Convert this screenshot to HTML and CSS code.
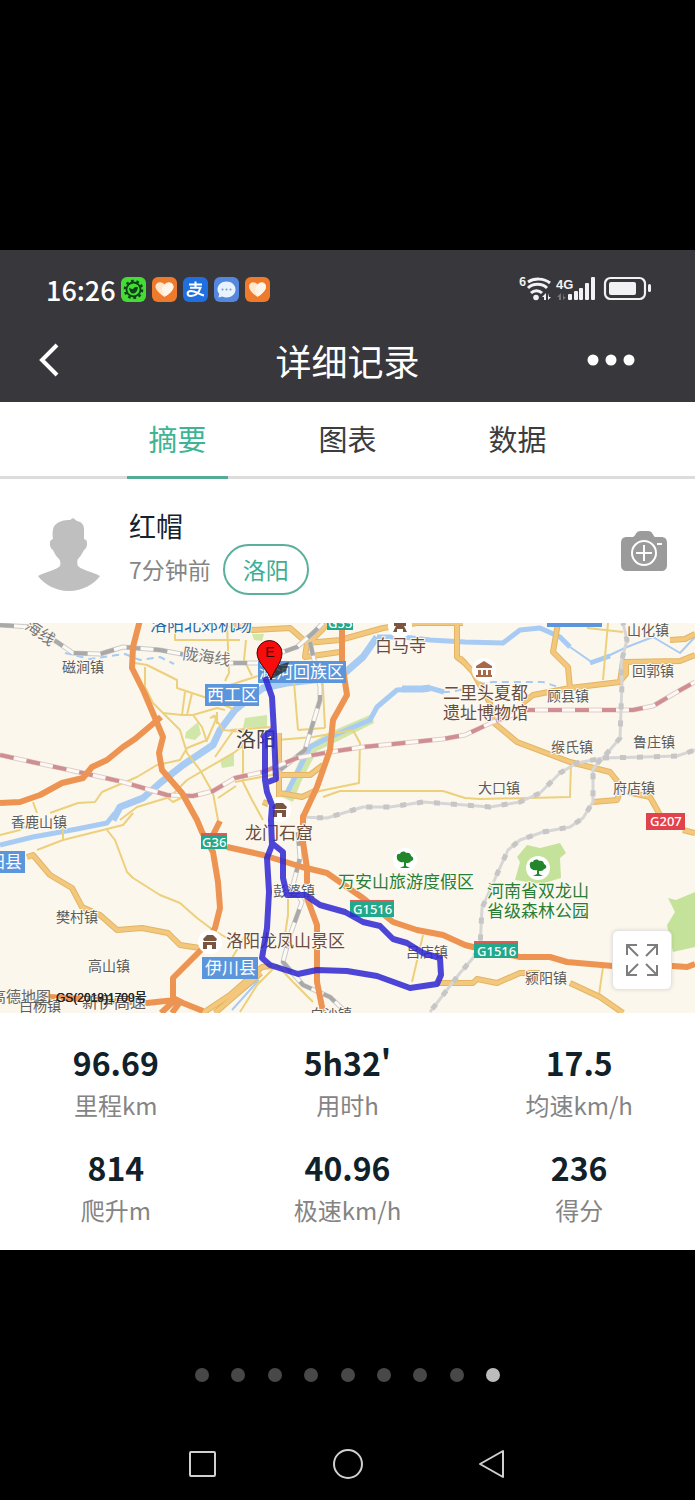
FILE: index.html
```
<!DOCTYPE html>
<html lang="zh-CN">
<head>
  <meta charset="utf-8">
  <meta name="viewport" content="width=device-width, initial-scale=1">
  <title>详细记录</title>
  <link rel="stylesheet" href="styles.css">
</head>
<body>
  <main class="screen">
    <header class="header">
      <div class="status-bar">
        <span class="time">16:26</span>
        <div class="app-icons">
          <svg class="app-icon" viewBox="0 0 25 25">
            <rect width="25" height="25" rx="6" fill="#45dc35"/>
            <circle cx="12.5" cy="12.5" r="8.7" fill="none" stroke="#10401a" stroke-width="2.2" stroke-dasharray="2.7 2.766"/>
            <circle cx="12.5" cy="12.5" r="7" fill="none" stroke="#10401a" stroke-width="1.8"/>
            <path d="M8 10.500c1.500 1 3 1.500 4.200 1.500 1-2 3-2.500 4.800-1.500-.8 4-2.500 6-5 6-2 0-3.500-2-4-6z" fill="#10401a"/>
          </svg>
          <svg class="app-icon" viewBox="0 0 25 25">
            <rect width="25" height="25" rx="6" fill="#f07a2c"/>
            <path d="M12.500 20C7 16 3.500 13 3.500 9.500c0-4.500 6-6 9-2 3-4 9-2.500 9 2 0 3.500-3.500 6.500-9 10.500z" fill="#ffe6cd"/>
            <path d="M10 12c1-4 5-7 8.500-6 3 1 3.500 4 2.500 6-1 2.500-4 5-7 7-3-1.500-4.500-4-4-7z" fill="#fff4e8"/>
          </svg>
          <svg class="app-icon" viewBox="0 0 25 25">
            <rect width="25" height="25" rx="6" fill="#1f6fe0"/>
            <path d="M6 7.500h13M12.500 4.500v6M7 10.800h10.500c-1.500 4.500-5 8.200-9.500 8.200-4.500 0-4.500-5 0-5 4 0 8 3 13 4.500" fill="none" stroke="#fff" stroke-width="2"/>
          </svg>
          <svg class="app-icon" viewBox="0 0 25 25">
            <rect width="25" height="25" rx="6" fill="#5487de"/>
            <path d="M12.500 4.500c5 0 9 3.400 9 8s-4 8-9 8c-1.600 0-3-.3-4.200-.9L4.500 20.500l.7-3.800c-1-1.200-1.700-2.600-1.700-4.200 0-4.600 4-8 9-8z" fill="#e8f3ff"/>
            <circle cx="8.500" cy="12.500" r="1" fill="#7799bb"/><circle cx="12.500" cy="12.500" r="1" fill="#7799bb"/><circle cx="16.500" cy="12.500" r="1" fill="#7799bb"/>
          </svg>
          <svg class="app-icon" viewBox="0 0 25 25">
            <rect width="25" height="25" rx="6" fill="#f07a2c"/>
            <path d="M12.500 20C7 16 4 13 4 9.500c0-4.500 5.500-6 8.500-2 3-4 8.500-2.500 8.500 2 0 3.500-3 6.500-8.500 10.500z" fill="#ffe6cd"/>
            <path d="M10 12c1-4 5-7 8-6 3 1 3.500 4 2.500 6-1 2.500-4 5-6.500 7-3-1.500-4.500-4-4-7z" fill="#fff4e8"/>
          </svg>
        </div>
        <svg class="signals" viewBox="0 0 132 26">
          <g fill="none" stroke="#f2f2f4">
            <path d="M9 6c6-4 16-4 22 1" stroke-width="3"/>
            <path d="M9 12c5-5 14-5 19 0" stroke-width="3"/>
            <path d="M12 17c3-3 8-3 11 0" stroke-width="3"/>
            <rect x="86" y="2" width="40" height="21" rx="5.500" stroke-width="2.2"/>
          </g>
          <g fill="#f2f2f4">
            <text class="signal-text" x="0" y="10">6</text>
            <text class="signal-text net" x="37" y="13">4G</text>
            <circle cx="17" cy="21.500" r="2.800"/>
            <path d="M27 17v7h-2v-3h-2zM29 17v7l3-3h-2z"/>
            <rect x="49" y="18" width="4" height="6" rx="1"/>
            <rect x="55" y="15" width="4" height="9" rx="1"/>
            <rect x="60" y="12" width="4" height="12" rx="1"/>
            <rect x="66" y="7" width="4" height="17" rx="1"/>
            <rect x="72" y="1" width="4" height="23" rx="1"/>
            <rect x="90" y="6" width="27" height="13" rx="2"/>
            <rect x="129" y="8" width="3" height="8" rx="1.500"/>
          </g>
          <path d="M42 17v7h-2v-3h-2zM44 17v7l3-3h-2z" fill="#77777b"/>
        </svg>
      </div>
      <div class="title-bar">
        <button class="icon-btn back" aria-label="返回">
          <svg width="20" height="34" viewBox="0 0 20 34"><path d="M18 2L3 17l15 15" fill="none" stroke="#fff" stroke-width="4"/></svg>
        </button>
        <h1>详细记录</h1>
        <button class="icon-btn more" aria-label="更多">
          <svg width="48" height="12" viewBox="0 0 48 12" fill="#fff"><circle cx="6" cy="6" r="5.500"/><circle cx="24" cy="6" r="5.500"/><circle cx="42" cy="6" r="5.500"/></svg>
        </button>
      </div>
    </header>

    <nav class="tabs">
      <a class="tab active" href="#summary">摘要</a>
      <a class="tab" href="#chart">图表</a>
      <a class="tab" href="#data">数据</a>
    </nav>

    <section class="profile" id="summary">
      <svg class="avatar" viewBox="0 0 62 73">
        <path d="M31 73C17 73 6 66 0 58c9-5 19-6 22-10 1-3 0-6-1-7-3-3-4-5-6-9-3-1-4-8-2-10l2-1c-1-7 0-12 2-14 4-4 9-5 15-5l3-2 4 3c5 1 7 4 7 8v10l2 1c2 2 1 9-2 10-2 4-4 7-6 9-1 1-1 5 0 7 3 4 13 5 22 10-6 8-17 15-31 15z" fill="#bfbfbf"/>
      </svg>
      <div class="profile-text">
        <h2>红帽</h2>
        <div class="meta">
          <span>7分钟前</span>
          <a class="city" href="#city">洛阳</a>
        </div>
      </div>
      <button class="icon-btn camera" aria-label="添加照片">
        <svg width="46" height="40" viewBox="0 0 46 40">
          <path d="M6 6h6c3-1 2-6 8-6h7c5 0 5 5 7 6h6c4 0 6 2 6 6v22c0 4-2 6-6 6H6c-4 0-6-2-6-6V12c0-4 2-6 6-6z" fill="#9b9b9b"/>
          <g fill="none" stroke="#fff" stroke-width="2"><circle cx="23" cy="22" r="12"/><path d="M23 14v16M15 22h16M36 13h5"/></g>
        </svg>
      </button>
    </section>

    <section class="map">
      <svg class="map-canvas" viewBox="0 3 695 390" role="img" aria-label="骑行轨迹">
        <rect y="3" width="695" height="390" fill="#fcf7ec"/>

        <g fill="#c5e29a">
          <path d="M527 225l13 3 20-5 6 10-6 5 1 20-20 6-26-4 5-18-3-5z"/>
          <path d="M668 278l8 2 19-8v55l-22 5-6-27 8-13z"/>
          <path d="M186 112l12-10 3 12-6 6-10-2zM220 140l14-8v14l-12 2zM245 98l22-3v12l-24 1zM252 14l12 0-2 7-8-1z" opacity=".8"/>
          <path d="M282 177l10-20 14-31 22-13 44-19 2 9-40 20-17 8-16 31-8 20z" opacity=".8"/>
        </g>

        <!-- rivers -->
        <g class="river">
          <path d="M113 200l7-13 23-9 17-15 23-18 30-20 7-15 15-20 12-10 16-12 24-5 53-6 23-20 14-20"/>
          <path d="M0 225l33-8 44-8 30-6 8-10" stroke-width="5"/>
          <path class="stream" d="M287 173l10-20 13-26 20-10 40-17 7-13 20-17 33-2 14 4"/>
          <path class="stream" d="M377 17l26 0 27 3 35 2 38 1 17-13 20-2 20 9 10 10"/>
          <path class="brook" d="M570 27l23 16 34-16 26-10 27 16 15-16"/>
          <path class="stream" d="M590 43l20-7"/>
          <path d="M402 69l20 0 8-1"/>
          <path class="brook" d="M443 72c20 0 30-8 50-10l50 0 18 6M65 33l25 6 35-5 15 6 20-3 14 7" stroke-dasharray="7 5"/>
          <path class="brook" d="M230 382l27-22M232 390l27-30"/>
        </g>

        <!-- minor roads -->
        <g class="minor">
          <path d="M33 182l4 11M50 193l28-10 17-1 7-10 35-15 20-12 23-5 7-12 20-8 10-23"/>
          <path d="M135 43l12 2 30 15v8l36 12 20 9M145 47v20l8 16 10 10 19 2h11l24-7 8 2"/>
          <path d="M182 95l3-23M192 73l-5 22M193 95l9 12 5 15M163 93l17 17 7 23 13 17 13 23 5 27"/>
          <path d="M175 3v17h65M227 3l2 50-4 8M120 200l17-13 33-10 17-17 48-28 10-8M215 137l18-26M213 95l10 15 20 2"/>
          <path d="M168 178l5 4 10-5M218 178l18-12M210 98l8-3M217 92v12"/>
          <path d="M230 110l43-3M298 110l-5-60M325 108l-3-58M298 110l27-2M235 162l42-8M243 110v52l9 18 11 20M246 20l-2 20 8 16M230 65l28-9"/>
          <path d="M277 120l36-3 40-7 7 13-1 40-49 10M323 177l17-6h103l22 7 15 1 90-2 1-34"/>
          <path d="M603 60l5-57M587 8l36 4M0 215l20-5 15-10M63 220v-12M37 230l26-10 40-10 20-5 10-12"/>
          <path d="M107 210l8 10 12 32 6 6 27 17 20 8 17 15 16 12 14 8"/>
          <path d="M288 275v20l-5 33M240 392l17-27 20-20 16 17 20 20M423 315l-3 13-8 34M603 347l-4 28M247 313l-15 25"/>
        </g>

        <!-- county roads -->
        <g class="road casing">
          <path d="M27 237l6-2 17 20 22 13 10 19 18 8 17 15 25-2 26 5 12 12 20 3"/>
          <path d="M460 38l13 14 17 31 3 19 24 20 53 20 40 10 12 15-5 13-24 2M627 172l23 5 10 18M683 210l12 3"/>
          <path d="M558 3l-5 29 15 15 2 21 50-6 3-20 57-1 15-6M523 83l10-8 37-7M621 60l5-6v-12M457 3v34l8 6M670 20l15-1 10-5"/>
          <path d="M230 5l23 5 37-2 17 15 33-3 43-12 34-5h46M307 23l-2 14 35-5M310 22l12-12 5-7"/>
          <path d="M280 155h30l13-10M280 173l22 4 15-7M279 113v64M263 182l12 5"/>
          <path d="M437 363h36l4-4 20 4 23-10h20M570 363l30 14 23 16M203 393l27-18 32-28 10-1M215 393l46-40"/>
        </g>
        <g class="road">
          <path d="M27 237l6-2 17 20 22 13 10 19 18 8 17 15 25-2 26 5 12 12 20 3"/>
          <path d="M460 38l13 14 17 31 3 19 24 20 53 20 40 10 12 15-5 13-24 2M627 172l23 5 10 18M683 210l12 3"/>
          <path d="M558 3l-5 29 15 15 2 21 50-6 3-20 57-1 15-6M523 83l10-8 37-7M621 60l5-6v-12M457 3v34l8 6M670 20l15-1 10-5"/>
          <path d="M230 5l23 5 37-2 17 15 33-3 43-12 34-5h46M307 23l-2 14 35-5M310 22l12-12 5-7"/>
          <path d="M280 155h30l13-10M280 173l22 4 15-7M279 113v64M263 182l12 5"/>
          <path d="M437 363h36l4-4 20 4 23-10h20M570 363l30 14 23 16M203 393l27-18 32-28 10-1M215 393l46-40"/>
        </g>

        <!-- railways -->
        <g class="rail">
          <path d="M0 5l30 2 27 15 16 11 27 1 23-7 37 3 70 13h27l23-10 17-6 16-14 10-10M310 22l10 45v13l-10 33-5 17-25 20M298 212l2 26-7 27 9 17-12 33-7 27 20 23 27 12 17 16"/>
          <path class="inner" d="M0 5l30 2 27 15 16 11 27 1 23-7 37 3 70 13h27l23-10 17-6 16-14 10-10M310 22l10 45v13l-10 33-5 17-25 20M298 212l2 26-7 27 9 17-12 33-7 27 20 23 27 12 17 16"/>
          <path class="dash" d="M0 5l30 2 27 15 16 11 27 1 23-7 37 3 70 13h27l23-10 17-6 16-14 10-10M310 22l10 45v13l-10 33-5 17-25 20M298 212l2 26-7 27 9 17-12 33-7 27 20 23 27 12 17 16"/>
        </g>
        <g class="rail fast">
          <path d="M0 135l83 18 40 9 44 13 26 1 20-5 22-13 28-6 34-14 33-6 33-5 80-8 22-4 28-13 34-12h106l20-4 24-14 18-10"/>
          <path class="inner" d="M0 135l83 18 40 9 44 13 26 1 20-5 22-13 28-6 34-14 33-6 33-5 80-8 22-4 28-13 34-12h106l20-4 24-14 18-10"/>
          <path class="dash" d="M0 135l83 18 40 9 44 13 26 1 20-5 22-13 28-6 34-14 33-6 33-5 80-8 22-4 28-13 34-12h106l20-4 24-14 18-10"/>
        </g>
        <g class="bead">
          <path d="M300 197l27 1 36-11h27l33-5 42 3 25 2 30-5 20-9 20-20 17-10 26-5 17-20 2-55-1-20 6-23-4-17M603 138l40-1 34-1 18-6M601 139l-8 10v33l-10 16-13 9-27 5-23 8-12 10-10 22-16 36-2 40-7 10-13 15-30 39"/>
          <path class="bead-dots" d="M300 197l27 1 36-11h27l33-5 42 3 25 2 30-5 20-9 20-20 17-10 26-5 17-20 2-55-1-20 6-23-4-17M603 138l40-1 34-1 18-6M601 139l-8 10v33l-10 16-13 9-27 5-23 8-12 10-10 22-16 36-2 40-7 10-13 15-30 39"/>
        </g>

        <!-- expressways -->
        <g class="highway">
          <path d="M140 0l-7 27-1 21 12 24 11 26 8 19-4 16 3 17 20 23 15 27 5 12 11 20 5 30 2 26-5 20-12 20-30 30v20l10 5 20 8M213 215l7-14M50 377l50 3 47 3 28-3-14 13M180 382l-8 11"/>
          <path d="M0 183l20-1 20-7 22-12 21-5 9-11 15-7 16-13 12-8 26-22"/>
          <path d="M342 0v43l5 32-14 25-3 30-13 37-14 30v25l4 26v30l10 27v57l6 30"/>
          <path d="M227 227l36 8 39 12 25 6 20 14 16 11 30 24 24 8 26 5 22 10 12 3 43 9h30l17 5 46 4h60l14 1 8-3"/>
        </g>

        <!-- labels -->
        <g fill="#5b96dc">
          <rect x="547" y="3" width="55" height="4"/>
          <rect x="205" y="64" width="54" height="22"/>
          <rect x="258" y="41" width="88" height="22"/>
          <rect x="0" y="231" width="25" height="22"/>
          <rect x="202" y="337" width="56" height="22"/>
        </g>
        <g fill="#22a88a">
          <rect x="327" y="3" width="26" height="7"/>
          <rect x="201" y="213" width="26" height="16"/>
          <rect x="350" y="281" width="44" height="16"/>
          <rect x="474" y="322" width="44" height="16"/>
        </g>
        <g fill="#d95c55">
          <rect x="201" y="213" width="26" height="2"/>
          <rect x="350" y="280" width="44" height="2"/>
          <rect x="474" y="321" width="44" height="2"/>
        </g>
        <rect x="646" y="193" width="39" height="17" fill="#e0434c"/>

        <g fill="#fff">
          <circle cx="484" cy="50" r="12"/><circle cx="400" cy="6" r="12"/><circle cx="279" cy="190" r="12"/>
          <circle cx="210" cy="322" r="12"/><circle cx="405" cy="240" r="12"/><circle cx="538" cy="248" r="12"/>
        </g>
        <g fill="#7a5540">
          <path d="M476 48v-2l8-5 8 5v2zM478 50h3v5h2v-5h3v5h2v-5h3v5h1v2h-16v-2h2z" fill="#a8694a"/>
          <path d="M394 3h12v3h-2l3 6h-4v-3h-6v3h-4l3-6h-2z"/>
          <path d="M272 187l4-4h7l4 4-1 2h-13zM273 190h13v7h-4v-4h-5v4h-4z"/>
          <path d="M203 319l4-4h6l4 4-1 2h-12zM203 322h13v7h-4v-4h-5v4h-4z"/>
        </g>
        <g fill="#24862a">
          <path d="M397 238c-1-3 1-5 3-4 1-3 5-3 6-1 3-1 5 1 5 3 3 1 3 5 0 5-1 2-3 2-5 2v3l4 2h-10l4-2v-4c-3 1-7-1-7-4z"/>
          <path d="M530 246c-1-3 1-5 3-4 1-3 5-3 6-1 3-1 5 1 5 3 3 1 3 5 0 5-1 2-3 2-5 2v3l4 2h-10l4-2v-4c-3 1-7-1-7-4z"/>
        </g>

        <g class="place town">
          <text x="62" y="52">磁涧镇</text>
          <text x="627" y="15">山化镇</text>
          <text x="632" y="56">回郭镇</text>
          <text x="547" y="81">顾县镇</text>
          <text x="551" y="132">缑氏镇</text>
          <text x="633" y="127">鲁庄镇</text>
          <text x="478" y="173">大口镇</text>
          <text x="613" y="173">府店镇</text>
          <text x="11" y="207">香鹿山镇</text>
          <text x="56" y="302">樊村镇</text>
          <text x="88" y="351">高山镇</text>
          <text x="273" y="276">彭婆镇</text>
          <text x="406" y="337">吕店镇</text>
          <text x="525" y="363">颍阳镇</text>
          <text x="310" y="399">白沙镇</text>
          <text x="19" y="391">白杨镇</text>
          <text class="expressway-name" x="82" y="388">新伊高速</text>
        </g>
        <g class="place rail-name">
          <text transform="translate(182 39) rotate(8)">陇海线</text>
          <text transform="translate(24 8) rotate(35)">海线</text>
        </g>
        <text class="place airport" x="150" y="11">洛阳北郊机场</text>
        <g class="place sight">
          <text x="375" y="32">白马寺</text>
          <text x="443" y="79">二里头夏都</text>
          <text x="443" y="99">遗址博物馆</text>
          <text x="245" y="219">龙门石窟</text>
          <text x="226" y="327">洛阳龙凤山景区</text>
        </g>
        <g class="place park">
          <text x="338" y="268">万安山旅游度假区</text>
          <text x="487" y="277">河南省双龙山</text>
          <text x="487" y="297">省级森林公园</text>
        </g>
        <text class="place city-name" x="236" y="127">洛阳</text>
        <g class="district">
          <text x="207" y="81">西工区</text>
          <text x="259" y="58">瀍河回族区</text>
          <text x="-12" y="248">阳县</text>
          <text x="205" y="354">伊川县</text>
        </g>
        <g class="road-no">
          <text x="328" y="8">G55</text>
          <text x="202" y="227">G36</text>
          <text x="353" y="294">G1516</text>
          <text x="477" y="336">G1516</text>
          <text x="650" y="206">G207</text>
        </g>
        <text class="credit-name" x="-9" y="382">高德地图</text>
        <text class="credit" x="56" y="382">GS(2018)1709号</text>
        <text class="credit" x="56" y="382">GS(2019)1700号</text>

        <!-- ridden track -->
        <path class="track" d="M265 57l7 20 2 36 2 46-8 3M273 110l-8 6v44l2 12 5 13-1 15 1 25-5 13 2 34-2 36-5 30 8 7 28 9 19-4 30 1 30 5 33 12 27-4 4-9-1-17-17-5-16-10-14-4-13-13-17-4-18-10-25-7-15-10h-18l-4-17v-26l-10-8"/>

        <!-- end marker -->
        <path d="M271 59l2-12 16-5-3 9z" fill="#222" opacity=".75"/>
        <path d="M271 60c-2-9-14-17-14-27a12 12 0 0 1 25 0c0 10-9 18-11 27z" fill="#f80d0d" stroke="#3a0808"/>
        <text class="marker-letter" x="270" y="37">E</text>
      </svg>
      <button class="expand" aria-label="全屏地图">
        <svg width="34" height="34" viewBox="0 0 34 34" fill="none" stroke="#7d7d7d" stroke-width="2">
          <path d="M2 12V2h10M2 2l11 11M22 2h10v10M32 2L21 13M2 22v10h10M2 32l11-11M32 22v10H22M32 32L21 21"/>
        </svg>
      </button>
    </section>

    <dl class="stats">
      <div class="stat"><dt>里程km</dt><dd>96.69</dd></div>
      <div class="stat"><dt>用时h</dt><dd>5h32'</dd></div>
      <div class="stat"><dt>均速km/h</dt><dd>17.5</dd></div>
      <div class="stat"><dt>爬升m</dt><dd>814</dd></div>
      <div class="stat"><dt>极速km/h</dt><dd>40.96</dd></div>
      <div class="stat"><dt>得分</dt><dd>236</dd></div>
    </dl>
  </main>

  <div class="dots">
    <span class="dot"></span>
    <span class="dot"></span>
    <span class="dot"></span>
    <span class="dot"></span>
    <span class="dot"></span>
    <span class="dot"></span>
    <span class="dot"></span>
    <span class="dot"></span>
    <span class="dot current"></span>
  </div>

  <nav class="system-nav">
    <button class="icon-btn" aria-label="最近任务">
      <svg width="30" height="30" viewBox="0 0 30 30"><rect x="2" y="3" width="25" height="24" rx="1"/></svg>
    </button>
    <button class="icon-btn" aria-label="主屏幕">
      <svg width="30" height="30" viewBox="0 0 30 30"><circle cx="15" cy="15" r="14"/></svg>
    </button>
    <button class="icon-btn" aria-label="系统返回">
      <svg width="30" height="30" viewBox="0 0 30 30"><path d="M25 2v26L2 15z"/></svg>
    </button>
  </nav>
</body>
</html>
```
FILE: styles.css
```
* {
  box-sizing: border-box;
}
body {
  font-family: "Noto Sans CJK SC", sans-serif;
  background: #000;
  margin: 0;
  padding: 250px 0 20px;
  min-height: 100vh;
}
h1, h2, dl, dd {
  margin: 0;
  font-weight: 400;
}
a {
  color: inherit;
  text-decoration: none;
}
.screen {
  background: #fff;
}
.icon-btn {
  display: flex;
  background: none;
  border: none;
  padding: 0;
  cursor: pointer;
}

/* header */
.header {
  background: #38373b;
  color: #fff;
}
.status-bar {
  display: flex;
  align-items: center;
  height: 70px;
  padding: 8px 44px 0 46px;
}
.time {
  font-size: 27px;
  font-weight: 500;
}
.app-icons {
  display: flex;
  gap: 6px;
  margin-left: 5px;
}
.app-icon {
  width: 25px;
  height: 25px;
}
.signals {
  width: 132px;
  height: 26px;
  margin-left: auto;
}
.signal-text {
  font-size: 12px;
  font-weight: 700;
}
.signal-text.net {
  font-family: "Liberation Sans", sans-serif;
  font-size: 13px;
}
.title-bar {
  display: grid;
  grid-template-columns: 1fr auto 1fr;
  align-items: center;
  height: 82px;
  padding: 0 60px 2px 39px;
}
.title-bar h1 {
  font-size: 36px;
  line-height: 52px;
  margin-left: 21px;
}
.more {
  justify-self: end;
}

/* tabs */
.tabs {
  display: flex;
  justify-content: center;
  gap: 69px;
  height: 77px;
  border-bottom: 3px solid #dcdcdc;
}
.tab {
  width: 101px;
  margin-bottom: -3px;
  font-size: 29px;
  line-height: 72px;
  text-align: center;
  color: #3c3c3c;
}
.tab.active {
  color: #3db594;
  border-bottom: 3px solid #55ac96;
}

/* profile */
.profile {
  display: flex;
  align-items: center;
  height: 144px;
  padding: 0 28px 0 38px;
}
.avatar {
  width: 62px;
  height: 73px;
  margin-top: 6px;
}
.profile-text {
  flex: 1;
  margin-left: 29px;
}
.profile-text h2 {
  font-size: 27px;
  line-height: 36px;
  color: #14222b;
}
.meta {
  display: flex;
  align-items: center;
  gap: 12px;
  font-size: 23px;
  color: #858585;
}
.city {
  padding: 0 18px;
  border: 2px solid #5bb09b;
  border-radius: 26px;
  line-height: 47px;
  color: #3dae92;
}

/* map */
.map {
  position: relative;
}
.map-canvas {
  display: block;
  width: 100%;
  height: auto;
}
.river,
.minor,
.road,
.rail,
.bead,
.highway,
.track {
  fill: none;
  stroke-linejoin: round;
}
.river {
  stroke: #a8cbf3;
  stroke-width: 7px;
}
.river .stream {
  stroke-width: 5px;
}
.river .brook {
  stroke-width: 2px;
}
.minor {
  stroke: #ecd07c;
  stroke-width: 2px;
}
.road {
  stroke: #f3c87c;
  stroke-width: 4px;
}
.road.casing {
  stroke: #e2b565;
  stroke-width: 6px;
}
.rail {
  stroke: #cbcbc9;
  stroke-width: 5px;
}
.rail .inner {
  stroke: #fdfaf5;
  stroke-width: 3px;
}
.rail .dash {
  stroke: #a9a9a9;
  stroke-width: 4px;
  stroke-dasharray: 14px 13px;
}
.rail.fast {
  stroke: #e2ccc8;
}
.rail.fast .dash {
  stroke: #cf8f92;
}
.bead {
  stroke: #d6d6d6;
  stroke-width: 3px;
}
.bead-dots {
  stroke: #c6c6c6;
  stroke-width: 5px;
  stroke-dasharray: 6px 11px;
}
.highway {
  stroke: #ee9452;
  stroke-width: 6px;
}
.track {
  stroke: #3028d2;
  stroke-width: 6px;
  stroke-opacity: 0.86;
}
.place {
  font-size: 17px;
  paint-order: stroke;
  stroke: #fdf9f0;
  stroke-width: 2px;
}
.town {
  font-size: 14px;
  fill: #5c5c5c;
}
.rail-name {
  font-size: 16px;
  fill: #777;
}
.expressway-name {
  font-size: 16px;
}
.airport {
  fill: #2869ad;
}
.sight {
  fill: #6b4c3c;
}
.park {
  fill: #277f35;
}
.city-name {
  font-size: 20px;
  fill: #444;
}
.district {
  font-size: 17px;
  fill: #fff;
}
.road-no {
  font-family: "Noto Sans", sans-serif;
  font-size: 13px;
  font-weight: 500;
  fill: #fff;
}
.credit-name {
  font-size: 15px;
  fill: #666;
}
.credit {
  font-family: "Liberation Sans", "Noto Sans CJK SC", sans-serif;
  font-size: 12px;
  fill: #222;
}
.marker-letter {
  font-family: "Liberation Sans", sans-serif;
  font-size: 14px;
  text-anchor: middle;
  fill: #2a0505;
}
.expand {
  position: absolute;
  right: 23px;
  bottom: 23px;
  display: grid;
  place-items: center;
  width: 60px;
  height: 60px;
  padding: 0;
  background: #fff;
  border: 1px solid #e4e4e4;
  border-radius: 6px;
  box-shadow: 0 0 4px rgba(0, 0, 0, 0.12);
  cursor: pointer;
}

/* stats */
.stats {
  display: grid;
  grid-template-columns: repeat(3, 1fr);
  row-gap: 20px;
  padding: 27px 0 20px;
}
.stat {
  display: flex;
  flex-direction: column-reverse;
  text-align: center;
}
.stat dt {
  font-size: 24px;
  line-height: 40px;
  color: #848484;
}
.stat dd {
  font-size: 32px;
  font-weight: 700;
  line-height: 45px;
  color: #10212a;
}

/* pager and system buttons */
.dots {
  display: flex;
  justify-content: space-between;
  width: 305px;
  margin: 118px auto 0;
}
.dot {
  width: 14px;
  height: 14px;
  border-radius: 50%;
  background: #484848;
}
.dot.current {
  background: #bcbcbc;
}
.system-nav {
  display: flex;
  justify-content: center;
  gap: 115px;
  margin-top: 67px;
}
.system-nav svg {
  fill: none;
  stroke: #d0d0d0;
  stroke-width: 2px;
  stroke-linejoin: round;
}
```
